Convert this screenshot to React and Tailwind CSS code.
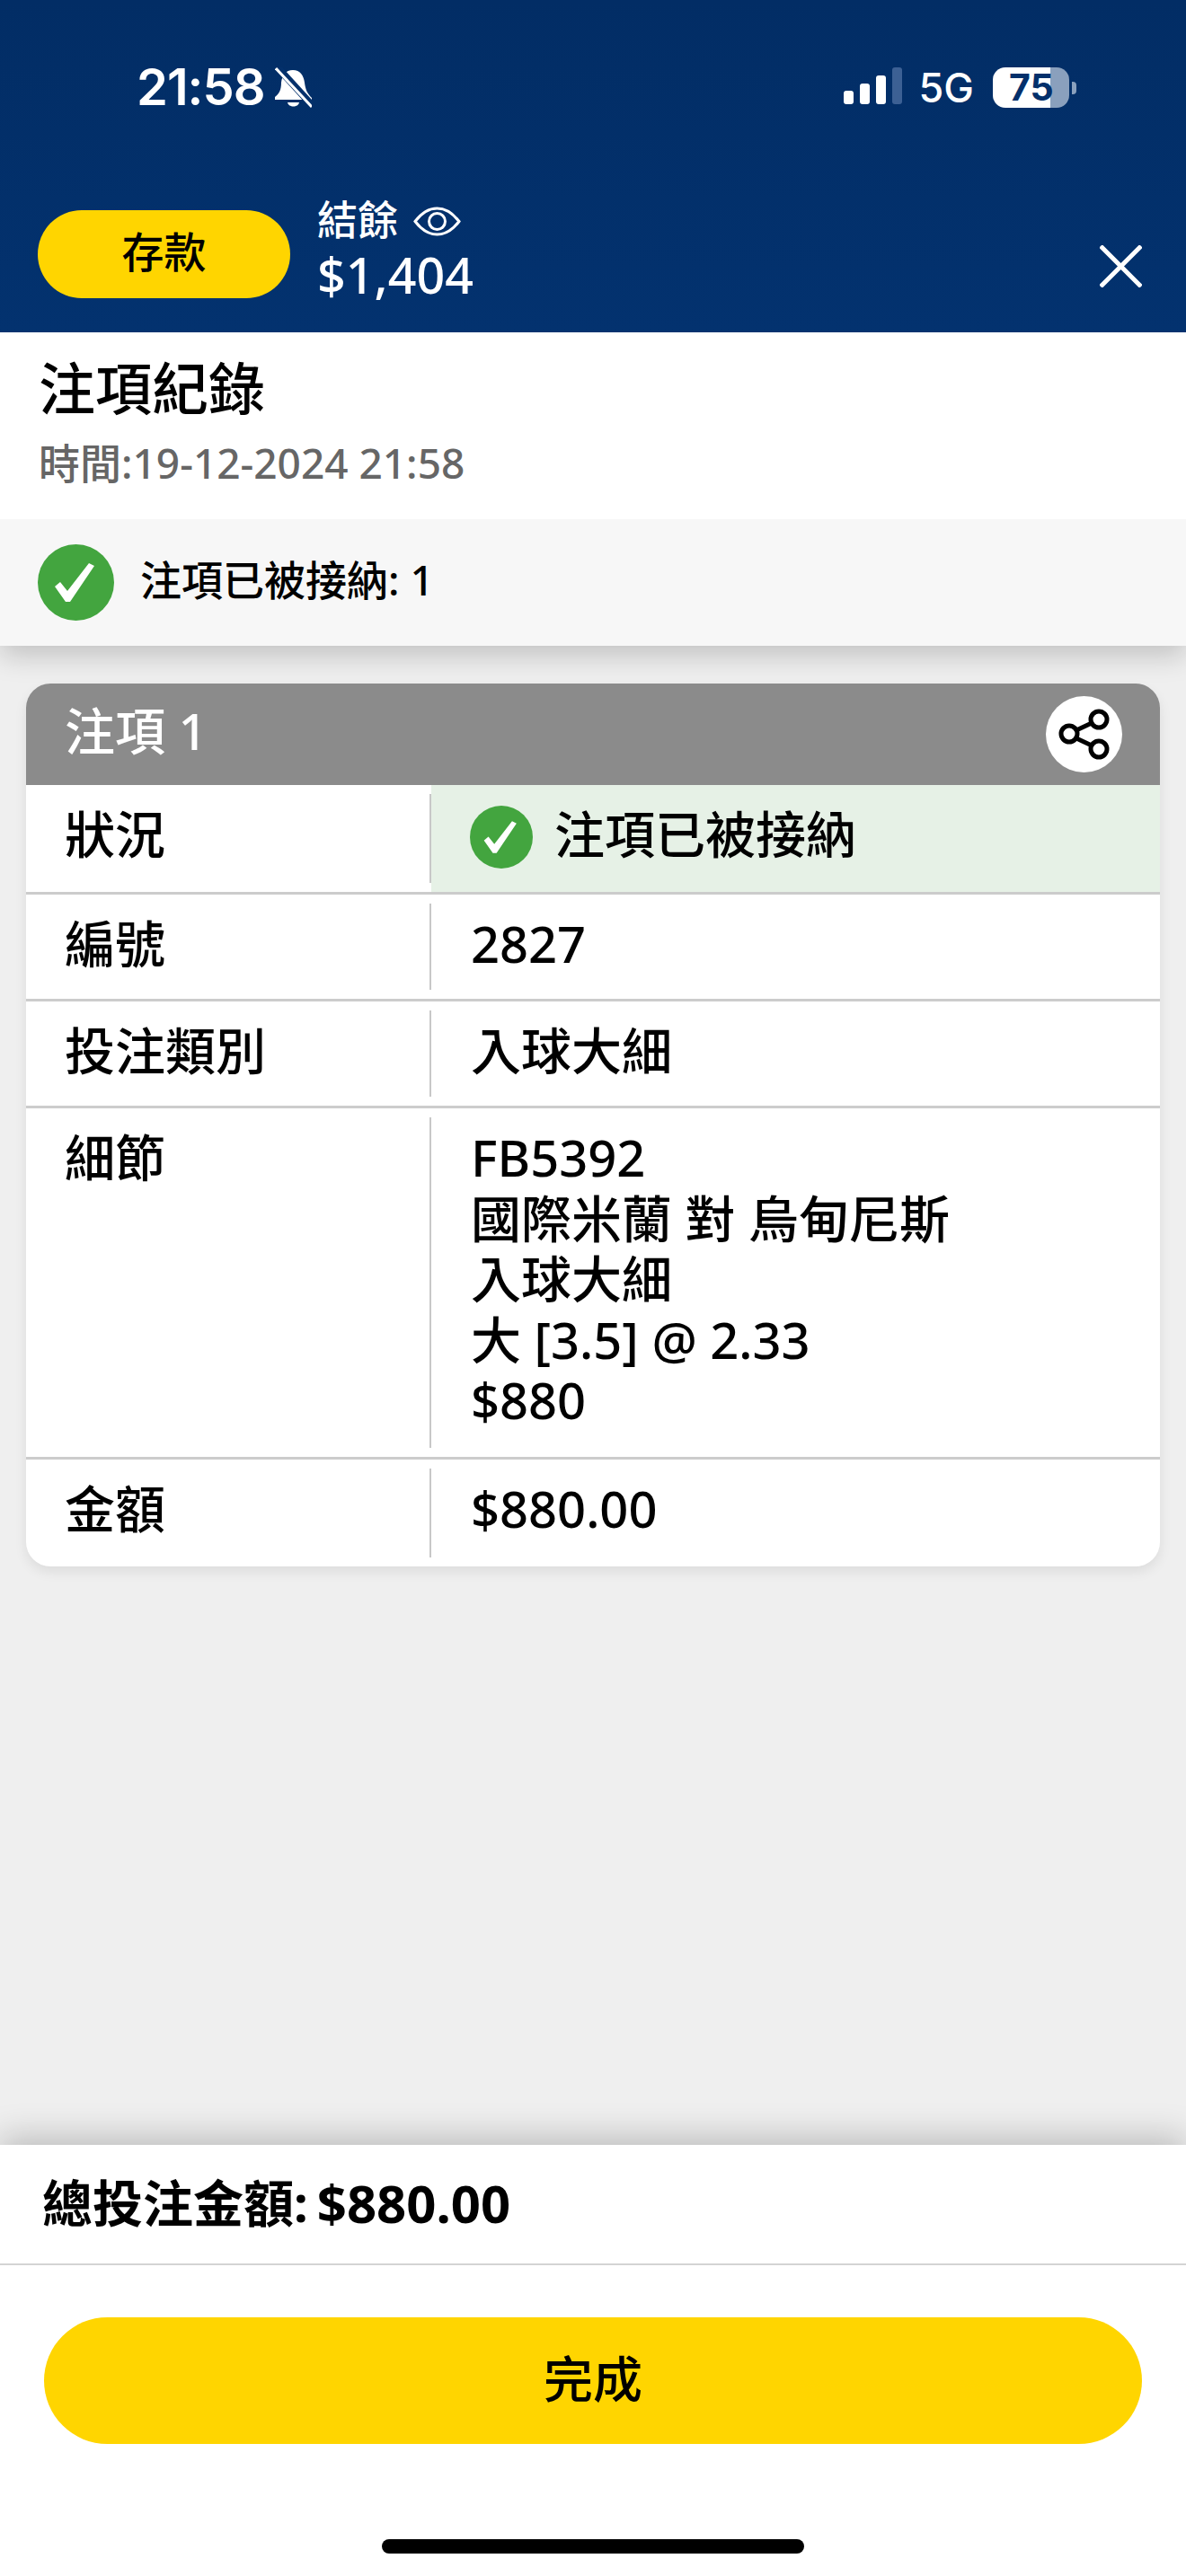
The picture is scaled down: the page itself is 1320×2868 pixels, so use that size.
const CheckBadge = ({ className }) => (
  <svg viewBox="0 0 85 85" className={className}>
    <circle cx="42.5" cy="42.5" r="42.5" fill="#43a53f" />
    <polygon points="19,47 25,42 33,52 57,21 63,24 36,64 31,64" fill="#fff" />
  </svg>
);

const StatusBar = () => (
  <div className="flex justify-between h-[47px] pl-[152px] pr-[122px]">
    <div className="flex items-center">
      <span className="[font-family:Inter,sans-serif] font-semibold text-[56px] leading-[47px] tracking-[-1px] text-white">21:58</span>
      <svg viewBox="0 0 41 45" className="w-[41px] h-[45px] ml-[11px]">
        <path d="M20 3 C28 3 32 9 33 17 C34 25 36 29 41 34 L41 36 L0 36 L0 33 C5 29 7 25 7 17 C8 9 12 3 20 3 Z" fill="#fff" />
        <path d="M14 39 H27 C26 45 15 45 14 39 Z" fill="#fff" />
        <path d="M1 -2 L43 44" stroke="#03306b" strokeWidth="8" />
        <path d="M1 1 L41 44" stroke="#fff" strokeWidth="3" />
      </svg>
    </div>
    <div className="flex items-center">
      <div className="flex items-end gap-[7px] h-[41px] mb-[4px]">
        <div className="w-[11px] h-[15px] rounded-[3px] bg-white" />
        <div className="w-[11px] h-[23px] rounded-[3px] bg-white" />
        <div className="w-[11px] h-[32px] rounded-[3px] bg-white" />
        <div className="w-[11px] h-[41px] rounded-[3px] bg-[#3c6094]" />
      </div>
      <span className="ml-[19px] [font-family:Inter,sans-serif] font-medium text-[45px] leading-[47px] text-white">5G</span>
      <div className="ml-[21px] w-[85px] h-[45px] rounded-[14px] bg-[linear-gradient(90deg,#ffffff_75.5%,#8aa0bd_75.5%)] flex items-center pl-[18px] [font-family:Inter,sans-serif] font-bold text-[41px] leading-[45px] text-[#03306b]">75</div>
      <div className="ml-[3px] w-[5px] h-[14px] rounded-r-[4px] bg-[#8aa0bd]" />
    </div>
  </div>
);

const Row = ({ label, children, green, last }) => (
  <div className={`flex text-[56px] leading-[67.5px] font-medium text-black ${last ? '' : 'border-b-[3px] border-[#cccccc]'}`}>
    <div className="flex w-[451px] py-[10px]">
      <div className="flex-1 border-r-[2px] border-[#c8c8c8] pl-[43px] pt-[11px] pb-[17.5px]">{label}</div>
    </div>
    <div className={`flex-1 py-[10px] ${green ? 'bg-[#e6f1e6]' : ''}`}>
      <div className="pl-[44px] pt-[11px] pb-[17.5px]">{children}</div>
    </div>
  </div>
);

const App = () => {
  return (
    <div className="w-[1320px] h-[2868px] flex flex-col overflow-hidden bg-[#efefef] [font-family:'Noto_Sans','Noto_Sans_CJK_TC',sans-serif]">
      <header className="h-[370px] shrink-0 bg-[linear-gradient(180deg,#022d65,#03326f)] pt-[74px]">
        <StatusBar />
        <div className="flex items-start mt-[95px] pl-[42px] pr-[49px]">
          <button className="w-[281px] h-[98px] mt-[18px] pb-[6px] rounded-full bg-[#ffd500] text-[47px] font-medium text-black">存款</button>
          <div className="ml-[30px] text-white font-medium">
            <div className="flex items-center text-[45px] leading-[58px]">
              結餘
              <svg viewBox="0 0 53 33" className="w-[53px] h-[33px] ml-[17px] mt-[3px]" fill="none" stroke="#fff" strokeWidth="3">
                <path d="M2 16.5 C10 6 18 2 26.5 2 C35 2 43 6 51 16.5 C43 27 35 31 26.5 31 C18 31 10 27 2 16.5 Z" />
                <circle cx="26.5" cy="16.5" r="9" />
              </svg>
            </div>
            <div className="text-[55.5px] leading-[64px]">$1,404</div>
          </div>
          <svg viewBox="0 0 47 47" className="w-[47px] h-[47px] ml-auto mt-[57px]" stroke="#fff" strokeWidth="5">
            <path d="M1 1 L46 46 M46 1 L1 46" />
          </svg>
        </div>
      </header>

      <section className="relative z-10 shrink-0 bg-white pl-[43px] h-[208px] pt-[20px]">
        <h1 className="text-[63px] leading-[84px] font-medium text-black">注項紀錄</h1>
        <p className="text-[46px] leading-[60px] mt-[11px] font-medium text-[#666666]">時間:19-12-2024 21:58</p>
      </section>

      <div className="shrink-0 h-[141px] bg-[#f7f7f7] flex items-center pl-[42px] shadow-[0_10px_30px_rgba(0,0,0,0.2)]">
        <CheckBadge className="w-[85px] h-[85px]" />
        <span className="ml-[29px] pb-[6px] text-[46px] font-medium text-black">注項已被接納: 1</span>
      </div>

      <main className="flex-1 px-[29px] pt-[42px]">
        <div className="relative rounded-[27px] bg-white overflow-hidden shadow-[0_6px_14px_rgba(0,0,0,0.08)]">
          <div className="flex items-center justify-between h-[113px] bg-[#8b8b8b] pl-[43px] pr-[42px]">
            <span className="pb-[10px] text-[56px] font-medium text-white">注項 1</span>
            <div className="w-[85px] h-[85px] rounded-full bg-white">
              <svg viewBox="0 0 85 85" className="w-[85px] h-[85px]" fill="none" stroke="#000" strokeWidth="5">
                <circle cx="26" cy="42" r="9" />
                <circle cx="59" cy="26" r="9" />
                <circle cx="59" cy="59" r="9" />
                <path d="M34 38 L51 30 M34 47 L51 55" />
              </svg>
            </div>
          </div>
          <Row label="狀況" green>
            <div className="pb-[3px]">
              <div className="flex items-center h-[67.5px]">
                <CheckBadge className="w-[70px] h-[70px] shrink-0 -ml-[1px] mt-[6px]" />
                <span className="ml-[24px]">注項已被接納</span>
              </div>
            </div>
          </Row>
          <Row label="編號">2827</Row>
          <Row label="投注類別">入球大細</Row>
          <Row label="細節">
            <div className="pb-[2px]">
              <div>FB5392</div>
              <div>國際米蘭 對 烏甸尼斯</div>
              <div>入球大細</div>
              <div>大 [3.5] @ 2.33</div>
              <div>$880</div>
            </div>
          </Row>
          <Row label="金額" last>
            <div className="pb-[3px]">$880.00</div>
          </Row>
        </div>
      </main>

      <footer className="relative shrink-0 h-[480px] bg-white shadow-[0_-8px_36px_rgba(0,0,0,0.22)]">
        <div className="h-[134px] border-b-[2px] border-[#d4d4d4] pl-[47px] pb-[4px] flex items-center font-bold text-black">
          <span className="text-[56px]">總投注金額:</span>
          <span className="ml-[10px] text-[58px]">$880.00</span>
        </div>
        <div className="px-[49px] pt-[58px]">
          <button className="w-full h-[141px] pb-[4px] rounded-full bg-[#ffd500] text-[55px] font-medium text-black">完成</button>
        </div>
        <div className="w-[470px] h-[16px] mx-auto mt-[106px] rounded-full bg-black" />
      </footer>
    </div>
  );
};

export default App;
